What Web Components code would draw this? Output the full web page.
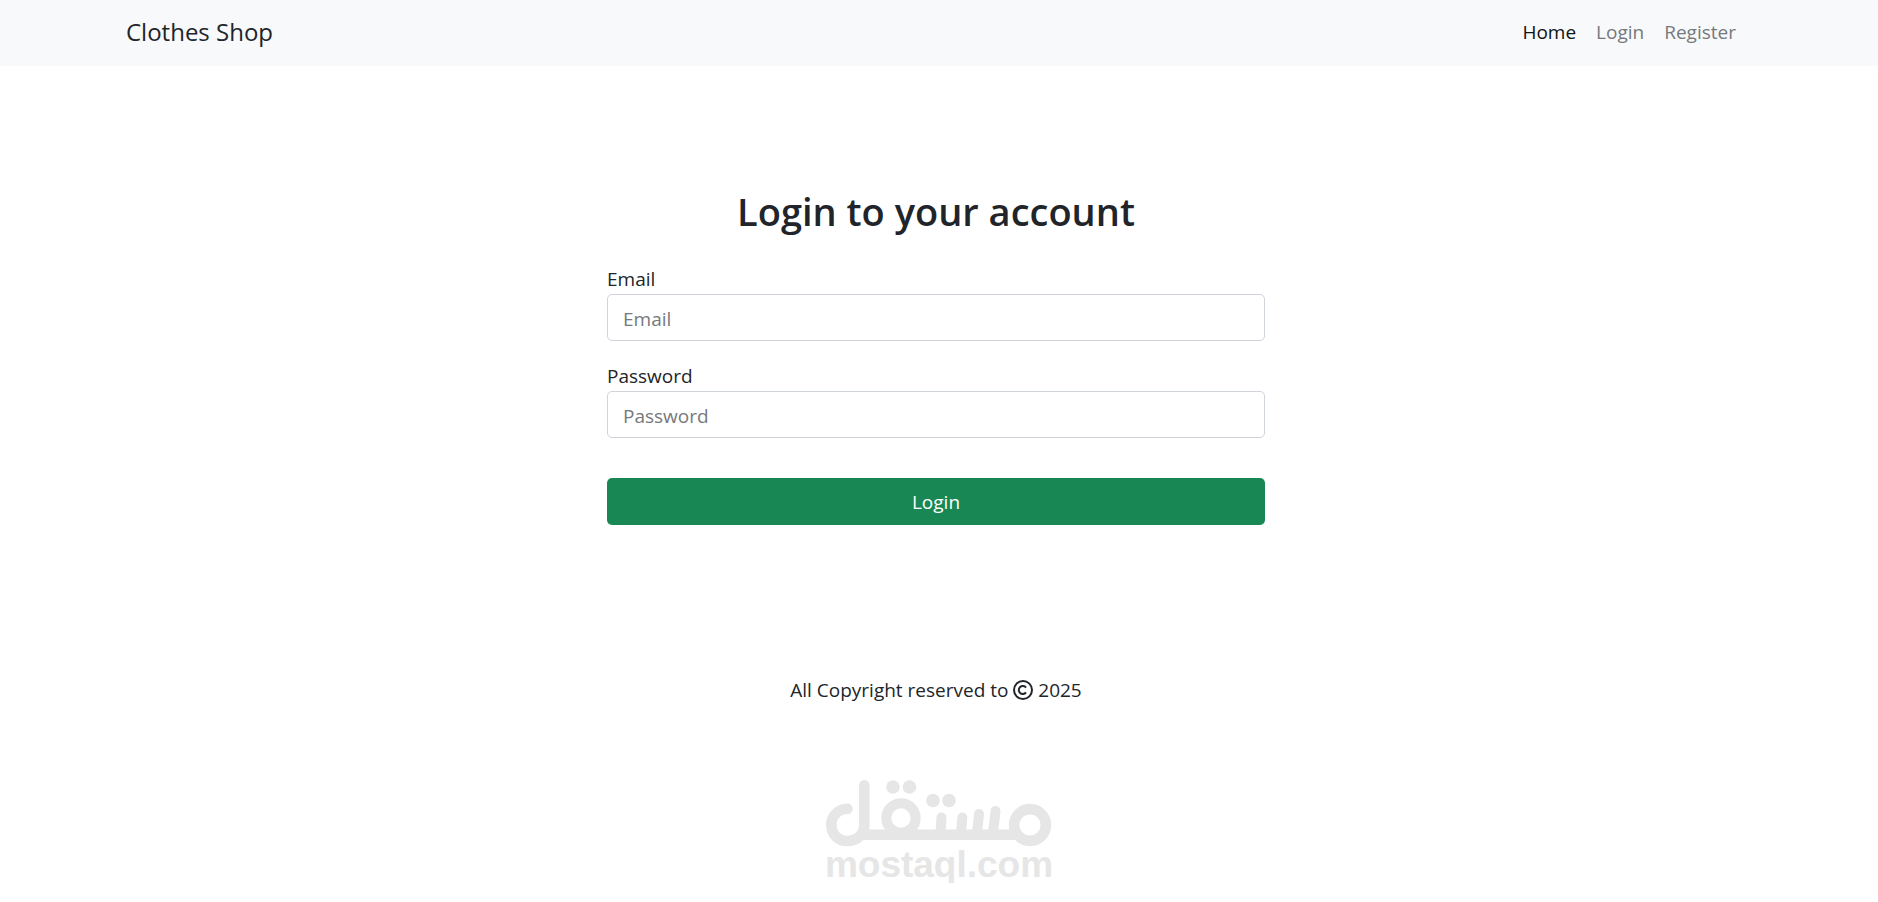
<!DOCTYPE html>
<html lang="en">
<head>
	<meta charset="utf-8">
	<meta name="viewport" content="width=device-width, initial-scale=1">
	<title>Clothes Shop</title>
	<style>
		body {
			margin: 0;
			background: #fff;
			color: #212529;
			font: 19px/30px "Open Sans", "Noto Sans", sans-serif;
			--muted: #75797d;
			--end-gutter: 6px;
		}
	</style>
</head>
<body>
	<shop-page>
		<shop-navbar slot="header">
			<span slot="brand">Clothes Shop</span>
			<nav-link href="#home" active>Home</nav-link>
			<nav-link href="#login">Login</nav-link>
			<nav-link href="#register">Register</nav-link>
		</shop-navbar>
		<login-form>Login to your account</login-form>
		<shop-footer slot="footer">2025</shop-footer>
		<mostaql-mark slot="footer"></mostaql-mark>
	</shop-page>

	<script>
		/**
		 * Base class, clones the markup of an element into its shadow root.
		 */
		class ShopElement extends HTMLElement {
			constructor() {
				super()
				const template = document.createElement('template')
				template.innerHTML = this.constructor.markup
				this.attachShadow({ mode: 'open' })
				this.shadowRoot.appendChild(template.content.cloneNode(true))
			}
		}

		/**
		 * Page frame: header, main content, footer.
		 */
		class ShopPage extends ShopElement {
			static markup = `
				<style>
					:host { display: block; }
					main {
						display: flex;
						justify-content: center;
						padding: 120px calc(20px + var(--end-gutter)) 150px 20px;
					}
					footer {
						display: flex;
						flex-direction: column;
						align-items: center;
						gap: 75px;
					}
				</style>
				<slot name="header"></slot>
				<main><slot></slot></main>
				<footer><slot name="footer"></slot></footer>
			`
		}

		class ShopNavbar extends ShopElement {
			static markup = `
				<style>
					:host {
						display: block;
						background: #f8f9fa;
						padding-right: var(--end-gutter);
					}
					.container {
						display: flex;
						align-items: center;
						justify-content: space-between;
						box-sizing: border-box;
						max-width: 1650px;
						margin: 0 auto;
						padding: 17px 15px 19px;
					}
					a {
						color: inherit;
						font-size: 24px;
						text-decoration: none;
					}
					nav {
						display: flex;
						gap: 20px;
						padding-right: 10px;
					}
				</style>
				<div class="container">
					<a href="#home"><slot name="brand"></slot></a>
					<nav><slot></slot></nav>
				</div>
			`
		}

		class NavLink extends ShopElement {
			static markup = `
				<style>
					:host { display: block; }
					a {
						color: var(--muted);
						text-decoration: none;
					}
					:host([active]) a { color: #101214; }
				</style>
				<a><slot></slot></a>
			`

			connectedCallback() {
				this.shadowRoot.querySelector('a').href = this.getAttribute('href')
			}
		}

		class LoginForm extends ShopElement {
			static markup = `
				<style>
					:host {
						display: block;
						width: 100%;
						max-width: 658px;
					}
					h1 {
						margin: 0 0 28px;
						font-size: 38px;
						font-weight: 600;
						line-height: 50px;
						text-align: center;
					}
					form {
						display: flex;
						flex-direction: column;
						gap: 20px;
					}
					button {
						margin-top: 20px;
						padding: 9px 15px 8px;
						border: 0;
						border-radius: 5px;
						background: #198754;
						color: #fff;
						font: inherit;
					}
				</style>
				<h1><slot></slot></h1>
				<form>
					<form-field label="Email" type="email"></form-field>
					<form-field label="Password" type="password"></form-field>
					<button type="submit">Login</button>
				</form>
			`

			connectedCallback() {
				this.shadowRoot.querySelector('form').addEventListener('submit', function (e) {
					e.preventDefault()
				})
			}
		}

		/**
		 * Label with its text box, takes the attributes label and type.
		 */
		class FormField extends ShopElement {
			static markup = `
				<style>
					:host { display: block; }
					label { display: block; }
					input {
						display: block;
						box-sizing: border-box;
						width: 100%;
						height: 47px;
						padding: 8px 15px 6px;
						border: 1px solid #ced4da;
						border-radius: 5px;
						background: #fff;
						color: inherit;
						font: inherit;
					}
					input::placeholder {
						color: var(--muted);
						opacity: 1;
					}
				</style>
				<label for="input"></label>
				<input id="input">
			`

			connectedCallback() {
				const input = this.shadowRoot.querySelector('input')
				this.shadowRoot.querySelector('label').textContent = this.getAttribute('label')
				input.placeholder = this.getAttribute('label')
				input.type = this.getAttribute('type')
			}
		}

		class ShopFooter extends ShopElement {
			static markup = `
				<style>
					:host {
						display: block;
						padding-right: var(--end-gutter);
					}
					p { margin: 0; }
					svg {
						width: 20px;
						height: 20px;
						vertical-align: -3px;
					}
				</style>
				<p>All Copyright reserved to <svg viewBox="0 0 20 20" fill="none" stroke="currentColor" stroke-width="2" aria-hidden="true"><circle cx="10" cy="10" r="9"/><path d="M13 7.6a4 4 0 1 0 0 4.8"/></svg> <slot></slot></p>
			`
		}

		/**
		 * Grey mark at the foot of the page: drawn word with the domain under it.
		 */
		class MostaqlMark extends ShopElement {
			static markup = `
				<style>
					:host {
						display: flex;
						flex-direction: column;
						align-items: center;
						color: #e6e6e6;
						font: bold 37px/36px "Liberation Sans", Arial, sans-serif;
					}
					svg {
						display: block;
						width: 226px;
						height: 67px;
					}
				</style>
				<svg viewBox="0 0 226 67" fill="none" stroke="currentColor" stroke-linecap="round" aria-hidden="true">
					<path stroke-width="10.6" d="M21.500 28.800C12 29 5.300 36 5.300 45C5.300 54.500 12.500 61 21.500 61C31 61 38.300 54 38.300 45V5.300M36 54.800H190"/>
					<circle cx="75" cy="38" r="14.700" stroke-width="10"/>
					<circle cx="204" cy="45" r="15.900" stroke-width="10.600"/>
					<path stroke-width="10" d="M114.500 53l1-15.500M135 53l1.300-15.500M151 53l2-19M167 53l2.500-22"/>
					<g fill="currentColor" stroke="none">
						<circle cx="67" cy="7" r="6.800"/>
						<circle cx="83.500" cy="7" r="6.800"/>
						<circle cx="107" cy="20.500" r="6.800"/>
						<circle cx="123" cy="20.500" r="6.800"/>
					</g>
				</svg>
				<span>mostaql.com</span>
			`
		}

		customElements.define('nav-link', NavLink)
		customElements.define('shop-navbar', ShopNavbar)
		customElements.define('form-field', FormField)
		customElements.define('login-form', LoginForm)
		customElements.define('shop-footer', ShopFooter)
		customElements.define('mostaql-mark', MostaqlMark)
		customElements.define('shop-page', ShopPage)
	</script>
</body>
</html>
